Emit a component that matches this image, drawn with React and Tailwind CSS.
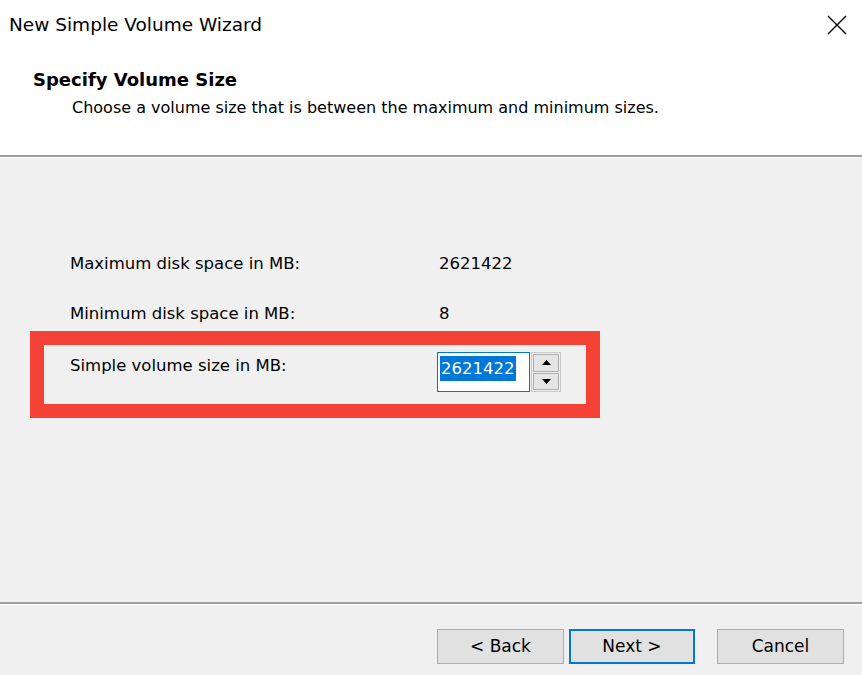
import React from 'react';

const font = { fontFamily: '"DejaVu Sans", "Liberation Sans", sans-serif' };

const Spinner = () => (
  <div className="flex flex-col w-[30px] h-[40px] border border-[#c8c8c8] bg-[#f0f0f0] p-[1px] gap-[1px]">
    <div className="flex-1 flex items-center justify-center border border-[#adadad] bg-[#e5e5e5]">
      <svg width="9" height="5" viewBox="0 0 9 5"><path d="M4.5 0 L9 5 L0 5 Z" fill="#000" /></svg>
    </div>
    <div className="flex-1 flex items-center justify-center border border-[#adadad] bg-[#e5e5e5]">
      <svg width="9" height="5" viewBox="0 0 9 5"><path d="M0 0 L9 0 L4.5 5 Z" fill="#000" /></svg>
    </div>
  </div>
);

const Button = ({ children, primary }) => (
  <button
    className={
      primary
        ? 'w-[126px] h-[35px] bg-[#e1e1e1] border-2 border-[#0078d7] text-[17px] text-black'
        : 'w-[127px] h-[35px] bg-[#e1e1e1] border border-[#adadad] text-[17px] text-black'
    }
  >
    {children}
  </button>
);

export default function App() {
  return (
    <div className="w-[862px] h-[675px] bg-[#f0f0f0] flex flex-col text-black" style={font}>
      {/* Header */}
      <div className="h-[155px] bg-white flex flex-col">
        <div className="h-[50px] flex items-center justify-between pl-[9px] pr-[15px]">
          <span className="text-[18.5px] leading-[24px]">New Simple Volume Wizard</span>
          <svg width="20" height="20" viewBox="0 0 20 20">
            <path d="M1 1 L19 19 M19 1 L1 19" stroke="#000" strokeWidth="1.4" />
          </svg>
        </div>
        <div className="pl-[33px] mt-[18px] text-[18px] leading-[24px] font-bold">Specify Volume Size</div>
        <div className="pl-[72px] mt-[4px] text-[16px] leading-[24px]">
          Choose a volume size that is between the maximum and minimum sizes.
        </div>
      </div>
      <div className="h-[2px] bg-[#a0a0a0]" />
      <div className="h-[1px] bg-white" />

      {/* Body */}
      <div className="flex-1 flex flex-col pt-[94px]">
        <div className="flex pl-[70px] text-[16.5px] leading-[24px]">
          <span className="w-[369px]">Maximum disk space in MB:</span>
          <span>2621422</span>
        </div>
        <div className="flex pl-[70px] mt-[26px] text-[16.5px] leading-[24px]">
          <span className="w-[369px]">Minimum disk space in MB:</span>
          <span>8</span>
        </div>
        <div className="ml-[30px] mt-[5px] w-[570px] h-[87px] border-[14px] border-[#f44336] flex pl-[26px] pt-[7px]">
          <span className="w-[367px] text-[16.5px] leading-[24px] pt-[2px]">Simple volume size in MB:</span>
          <div className="flex items-start gap-[1px]">
            <div className="w-[93px] h-[40px] border border-[#0078d7] bg-white pl-[2px] pt-[3px]">
              <span className="bg-[#0078d7] text-white text-[16.5px] leading-[25px] inline-block px-[1px]">2621422</span>
            </div>
            <Spinner />
          </div>
        </div>
      </div>

      {/* Footer */}
      <div className="h-[2px] bg-[#a0a0a0]" />
      <div className="h-[1px] bg-white" />
      <div className="h-[70px] flex justify-end items-start pt-[24px] pr-[18px]">
        <div className="flex gap-[5px]">
          <Button>&lt; Back</Button>
          <Button primary>Next &gt;</Button>
        </div>
        <div className="ml-[22px]">
          <Button>Cancel</Button>
        </div>
      </div>
    </div>
  );
}
